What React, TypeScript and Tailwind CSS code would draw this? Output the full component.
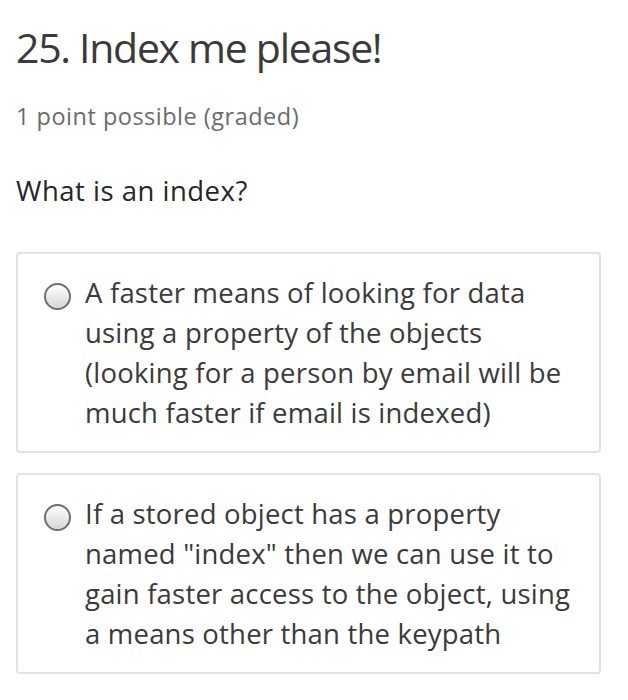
import React from 'react';

const options = [
  'A faster means of looking for data using a property of the objects (looking for a person by email will be much faster if email is indexed)',
  'If a stored object has a property named "index" then we can use it to gain faster access to the object, using a means other than the keypath',
];

function Radio() {
  return (
    <span className="mt-[10px] h-[27px] w-[27px] shrink-0 rounded-full border-[2px] border-[#6e6e6e] bg-gradient-to-b from-white to-[#d6d6d6]" />
  );
}

export default function App() {
  return (
    <div className="w-[628px] h-[700px] bg-white text-[#333] font-['Open_Sans',sans-serif]">
      <div className="pl-[16px] pr-[27px] pt-[19px]">
        <h2 className="text-[41px] leading-[56px] text-[#3a3a3a] font-normal tracking-[-1.3px]">25. Index me please!</h2>
        <p className="mt-[24px] text-[23.5px] leading-[34px] text-[#6b6b6b] tracking-[0.5px]">1 point possible (graded)</p>
        <p className="mt-[41px] text-[27.5px] leading-[34px] text-[#262626] tracking-[0.5px]">What is an index?</p>
        <div className="mt-[44px] flex flex-col gap-[20px]">
          {options.map((opt, i) => (
            <label
              key={i}
              className="flex gap-[14px] rounded-[4px] border-[2px] border-[#e2e2e2] pl-[26px] pr-[14px] pt-[19px] pb-[18px]"
            >
              <Radio />
              <span className="text-[27.5px] leading-[40px] text-[#3a3a3a] tracking-[0.2px]">{opt}</span>
            </label>
          ))}
        </div>
      </div>
    </div>
  );
}
